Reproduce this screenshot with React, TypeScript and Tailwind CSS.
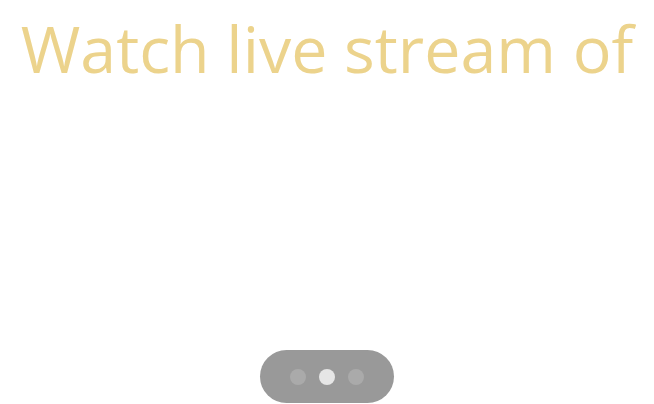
export default function App() {
  return (
    <div className="flex h-[404px] w-[654px] flex-col items-center justify-between overflow-hidden bg-white">
      <h1 className="mt-[8px] whitespace-nowrap text-[64.5px] leading-[80px] text-[#ecd38c] font-['Open_Sans',sans-serif]">
        Watch live stream of
      </h1>
      <div className="mb-[1px] flex h-[53px] w-[134px] items-center justify-center gap-[13px] rounded-full bg-[#999999]">
        <span className="h-[16px] w-[16px] rounded-full bg-[#aaaaaa]" />
        <span className="h-[16px] w-[16px] rounded-full bg-[#e6e6e6]" />
        <span className="h-[16px] w-[16px] rounded-full bg-[#aaaaaa]" />
      </div>
    </div>
  );
}
